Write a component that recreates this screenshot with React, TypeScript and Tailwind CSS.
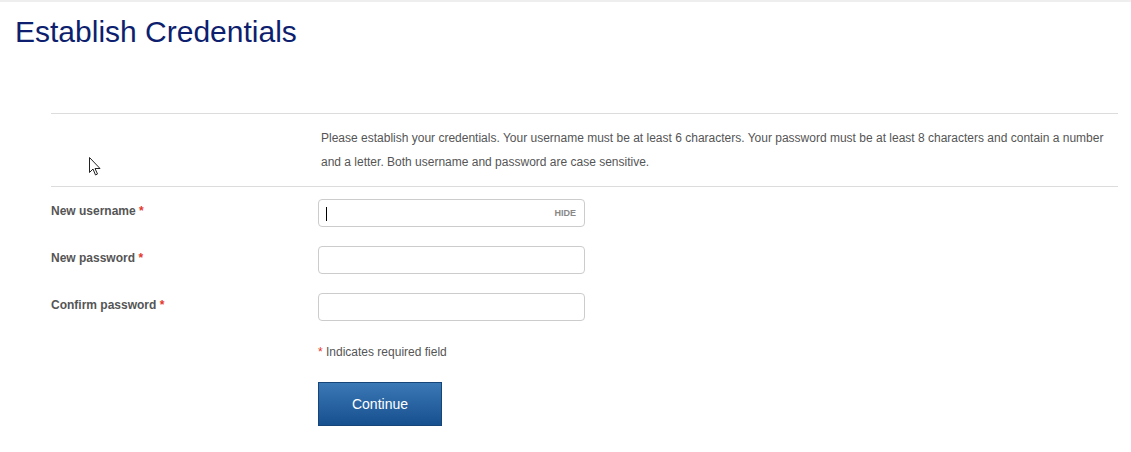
import React from 'react';

function Field({ label, hide }: { label: string; hide?: boolean }) {
  return (
    <div className="flex h-[47px]">
      <label className="w-[267px] pt-[3px] text-[12px] font-bold text-[#555]">
        {label} <span className="text-[#e4382b]">*</span>
      </label>
      <div className="relative h-[28px] w-[267px] rounded-[4px] border border-[#ccc] bg-white">
        {hide && (
          <>
            <span className="absolute left-[7px] top-[7px] h-[14px] w-px bg-black" />
            <span className="absolute right-[8px] top-[7px] text-[9px] font-bold text-[#888]">HIDE</span>
          </>
        )}
      </div>
    </div>
  );
}

export default function App() {
  return (
    <div className="relative min-h-[452px] bg-white font-['Liberation_Sans',Arial,sans-serif]">
      <div className="h-[2px] bg-[#eeeeee]" />
      <h1 className="ml-[15px] mt-[13px] text-[30px] leading-[34px] text-[#0d1f6e]">Establish Credentials</h1>

      <div className="ml-[51px] mr-[13px] mt-[64px]">
        <div className="flex border-y border-[#dcdcdc] py-[12px]">
          <div className="w-[270px]" />
          <p className="flex-1 text-[12px] leading-[24px] text-[#555]">
            Please establish your credentials. Your username must be at least 6 characters. Your password must be at least 8 characters and contain a number and a letter. Both username and password are case sensitive.
          </p>
        </div>

        <div className="mt-[12px]">
          <Field label="New username" hide />
          <Field label="New password" />
          <Field label="Confirm password" />
        </div>

        <div className="ml-[267px] mt-[3px]">
          <p className="text-[12px] text-[#555]">
            <span className="text-[#e4382b]">*</span> Indicates required field
          </p>
          <button className="mt-[21px] h-[44px] w-[124px] border border-[#16457a] bg-gradient-to-b from-[#3b78b6] to-[#17508e] text-[14px] text-white">
            Continue
          </button>
        </div>
      </div>

      <svg className="absolute left-[89px] top-[157px]" width="12" height="19" viewBox="0 0 12 19">
        <path d="M0.5 0.5 L0.5 15.5 L4 12 L6.5 18 L8.5 17 L6 11.5 L11 11.5 Z" fill="white" stroke="#222" strokeWidth="1" />
      </svg>
    </div>
  );
}
